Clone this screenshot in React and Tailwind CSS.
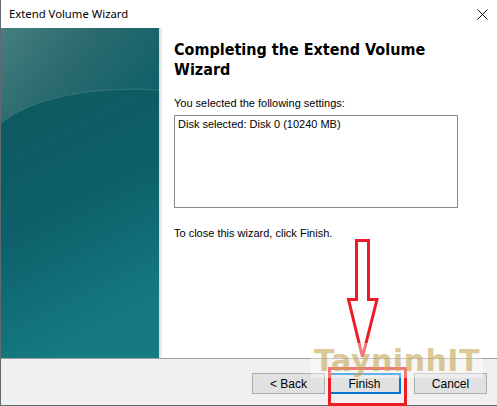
import React from 'react';

const Button = ({ children, primary }) => (
    <div
        className={
            'w-[73px] h-[21px] flex items-center justify-center bg-[#e1e1e1] text-[12px] text-black ' +
            (primary ? 'border-2 border-[#0078d7]' : 'border border-[#adadad]')
        }
    >
        {children}
    </div>
);

const TealArt = () => (
    <svg className="w-full h-full block" viewBox="0 0 158 330" preserveAspectRatio="none">
        <defs>
            <linearGradient id="bg" x1="0" y1="0" x2="0.6" y2="1">
                <stop offset="0" stopColor="#467f7f" />
                <stop offset="0.25" stopColor="#2c6b70" />
                <stop offset="0.6" stopColor="#0e5f68" />
                <stop offset="1" stopColor="#126d76" />
            </linearGradient>
            <linearGradient id="low" x1="0" y1="0" x2="0.3" y2="1">
                <stop offset="0" stopColor="#0f5960" />
                <stop offset="0.5" stopColor="#0d5f69" />
                <stop offset="1" stopColor="#157a82" />
            </linearGradient>
        </defs>
        <rect width="158" height="330" fill="url(#bg)" />
        {/* lower swoosh */}
        <path d="M0 95 C30 70 90 58 158 62 L158 330 L0 330 Z" fill="url(#low)" />
        <path d="M0 95 C30 70 90 58 158 62" stroke="#3a7a7c" strokeWidth="1.2" fill="none" opacity="0.7" />
    </svg>
);

export default function App() {
    return (
        <div
            className="relative w-[497px] h-[406px] flex flex-col bg-white border-l border-[#5e6a70] overflow-hidden"
            style={{ fontFamily: '"Liberation Sans", Arial, sans-serif' }}
        >
            {/* Title bar */}
            <div className="h-[28px] flex items-center justify-between pl-[8px] pr-[8px] bg-white">
                <span className="text-[11.3px] text-black" style={{ fontFamily: '"Noto Sans", sans-serif' }}>
                    Extend Volume Wizard
                </span>
                <svg width="11" height="11" viewBox="0 0 11 11" className="mr-[1px]">
                    <path d="M0.5 0.5 L10.5 10.5 M10.5 0.5 L0.5 10.5" stroke="#111" strokeWidth="1" />
                </svg>
            </div>

            {/* Body */}
            <div className="h-[330px] flex">
                <div className="w-[158px] h-full">
                    <TealArt />
                </div>
                <div className="w-[4px] h-full bg-gradient-to-r from-[#d9d9d9] to-white" />
                <div className="flex-1 flex flex-col pl-[11px] pt-[12px]">
                    <h1
                        className="text-[16px] leading-[20px] font-bold text-black w-[300px]"
                        style={{ fontFamily: '"DejaVu Sans Condensed", "DejaVu Sans", Verdana, sans-serif', fontStretch: 'condensed' }}
                    >
                        Completing the Extend Volume Wizard
                    </h1>
                    <p className="mt-[17px] text-[11px] leading-[13px] text-black">You selected the following settings:</p>
                    <div className="mt-[5px] w-[284px] h-[93px] border border-[#828790] px-[3px] pt-[2px]">
                        <p className="text-[11px] leading-[13px] text-black">Disk selected: Disk 0 (10240 MB)</p>
                    </div>
                    <p className="mt-[19px] text-[11px] leading-[13px] text-black">To close this wizard, click Finish.</p>
                </div>
            </div>

            {/* Button bar */}
            <div className="flex-1 bg-[#f0f0f0] border-t border-[#a0a0a0] border-b border-b-[#5e6a70] flex items-start justify-end pt-[14px] pr-[10px]">
                <Button>&lt; Back</Button>
                <div className="ml-[3px]">
                    <Button primary>Finish</Button>
                </div>
                <div className="ml-[13px]">
                    <Button>Cancel</Button>
                </div>
            </div>

            {/* Annotation: arrow + red box */}
            <svg className="absolute left-0 top-0 pointer-events-none" width="497" height="406">
                <path
                    d="M355.5 240.5 H367.5 V299.5 H376 L361.5 357 L347.5 299.5 H355.5 Z"
                    fill="none"
                    stroke="#ed1c24"
                    strokeWidth="3"
                    strokeLinejoin="miter"
                />
            </svg>
            <div className="absolute left-[327px] top-[367px] w-[79px] h-[39px] border-[3px] border-[#ed1c24]" />

            {/* Watermark */}
            <div className="absolute left-[310px] top-[343px] w-[172px] h-[35px] bg-white/40 flex items-center justify-center">
                <span
                    className="text-[30px] font-bold leading-none text-[#c4a653]/60 tracking-[0.5px]"
                    style={{ fontFamily: '"DejaVu Sans", Verdana, sans-serif' }}
                >
                    TayninhIT
                </span>
            </div>
        </div>
    );
}
